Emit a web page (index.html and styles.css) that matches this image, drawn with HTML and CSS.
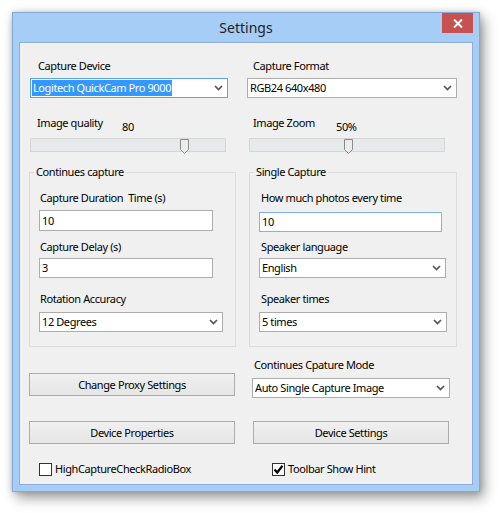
FILE: index.html
```html
<!DOCTYPE html>
<html>
<head>
<meta charset="utf-8">
<link rel="stylesheet" href="styles.css">
</head>
<body>
<div class="window">
  <div class="titlebar">
    <div></div>
    <div class="title">Settings</div>
    <div class="close"><svg width="10" height="9" viewBox="0 0 10 9"><path d="M1 0.5 L9 8.5 M9 0.5 L1 8.5" stroke="#fff" stroke-width="2" fill="none"/></svg></div>
  </div>
  <div class="client">
    <div class="grid top">
      <div class="col">
        <div class="lbl l-dev">Capture Device</div>
        <div class="combo focus c-dev"><span class="sel">Logitech QuickCam Pro 9000</span><svg class="arrow" width="9" height="6" viewBox="0 0 9 6"><path d="M1 1 L4.5 4.5 L8 1" stroke="#555" stroke-width="1.7" fill="none"/></svg></div>
      </div>
      <div class="col">
        <div class="lbl l-fmt">Capture Format</div>
        <div class="combo c-fmt"><span>RGB24 640x480</span><svg class="arrow" width="9" height="6" viewBox="0 0 9 6"><path d="M1 1 L4.5 4.5 L8 1" stroke="#555" stroke-width="1.7" fill="none"/></svg></div>
      </div>
    </div>

    <div class="grid sliders">
      <div class="col">
        <div class="shead"><span class="sname q-name">Image quality</span><span class="sval">80</span></div>
        <div class="track t-q"><svg class="thumb th-q" width="10" height="16" viewBox="0 0 10 16"><path d="M0.5 0.5 H8.5 V10.5 L4.5 14.5 L0.5 10.5 Z" fill="#ececec" stroke="#8a8a8a" stroke-width="1"/></svg></div>
      </div>
      <div class="col">
        <div class="shead"><span class="sname z-name">Image Zoom</span><span class="sval">50%</span></div>
        <div class="track t-z"><svg class="thumb th-z" width="10" height="16" viewBox="0 0 10 16"><path d="M0.5 0.5 H8.5 V10.5 L4.5 14.5 L0.5 10.5 Z" fill="#ececec" stroke="#8a8a8a" stroke-width="1"/></svg></div>
      </div>
    </div>

    <div class="grid groups">
      <fieldset class="grp g-left">
        <legend>Continues capture</legend>
        <div class="gbody">
          <div class="lbl gl1">Capture Duration&nbsp; Time (s)</div>
          <div class="input in1">10</div>
          <div class="lbl gl2">Capture Delay (s)</div>
          <div class="input in2">3</div>
          <div class="lbl gl3">Rotation Accuracy</div>
          <div class="combo gc3"><span>12 Degrees</span><svg class="arrow" width="9" height="6" viewBox="0 0 9 6"><path d="M1 1 L4.5 4.5 L8 1" stroke="#555" stroke-width="1.7" fill="none"/></svg></div>
        </div>
      </fieldset>
      <fieldset class="grp g-right">
        <legend>Single Capture</legend>
        <div class="gbody rbody">
          <div class="lbl gl1">How much photos every time</div>
          <div class="input focus rin1">10</div>
          <div class="lbl rl2">Speaker language</div>
          <div class="combo rc2"><span>English</span><svg class="arrow" width="9" height="6" viewBox="0 0 9 6"><path d="M1 1 L4.5 4.5 L8 1" stroke="#555" stroke-width="1.7" fill="none"/></svg></div>
          <div class="lbl gl3">Speaker times</div>
          <div class="combo rc3"><span>5 times</span><svg class="arrow" width="9" height="6" viewBox="0 0 9 6"><path d="M1 1 L4.5 4.5 L8 1" stroke="#555" stroke-width="1.7" fill="none"/></svg></div>
        </div>
      </fieldset>
    </div>

    <div class="grid proxy">
      <div class="col">
        <div class="btn b-proxy">Change Proxy Settings</div>
      </div>
      <div class="col">
        <div class="lbl l-mode">Continues Cpature Mode</div>
        <div class="combo c-mode"><span>Auto Single Capture Image</span><svg class="arrow" width="9" height="6" viewBox="0 0 9 6"><path d="M1 1 L4.5 4.5 L8 1" stroke="#555" stroke-width="1.7" fill="none"/></svg></div>
      </div>
    </div>

    <div class="grid buttons">
      <div class="btn b-props">Device Properties</div>
      <div class="btn b-dset">Device Settings</div>
    </div>

    <div class="grid checks">
      <div class="chk ck-left"><span class="box"></span><span>HighCaptureCheckRadioBox</span></div>
      <div class="chk ck-right"><span class="box"><svg width="11" height="11" viewBox="0 0 11 11"><path d="M1.5 5.5 L4.2 8.5 L9.5 1.8" stroke="#000" stroke-width="2.2" fill="none"/></svg></span><span>Toolbar Show Hint</span></div>
    </div>
  </div>
</div>
</body>
</html>
```

FILE: styles.css
```css
* { box-sizing: border-box; }
html, body { margin: 0; padding: 0; background: #ffffff; }
body {
  font-family: "Noto Sans", "Open Sans", sans-serif;
  font-size: 11px;
  letter-spacing: -0.4px;
  color: #000;
  width: 500px;
  height: 513px;
  overflow: hidden;
}
.window {
  margin: 12px 0 0 12px;
  width: 468px;
  height: 480px;
  background: #a5cdf6;
  border: 1px solid #82a9d8;
  box-shadow: 0 0 6px rgba(0,0,0,0.18), 4px 6px 12px rgba(0,0,0,0.38);
}
.titlebar {
  height: 29px;
  display: grid;
  grid-template-columns: 1fr auto 1fr;
  align-items: center;
}
.title {
  font-size: 14px;
  letter-spacing: 0;
  color: #1f1f1f;
  line-height: 20px;
}
.close {
  justify-self: end;
  align-self: start;
  margin-right: 6px;
  width: 31px;
  height: 20px;
  background: #c75050;
  display: flex;
  align-items: center;
  justify-content: center;
}
.client {
  margin: 0 6px;
  width: 454px;
  height: 443px;
  background: #f0f0f0;
  border: 1px solid #8eaed6;
  padding: 15px 0 0 9px;
}
.grid {
  display: grid;
  grid-template-columns: 206px 210px;
  column-gap: 12px;
  align-items: start;
}
.col { display: flex; flex-direction: column; align-items: flex-start; }
.lbl { line-height: 16px; white-space: nowrap; }

.combo {
  height: 20px;
  background: #fff;
  border: 1px solid #acacac;
  display: flex;
  align-items: center;
  justify-content: space-between;
  padding: 0 4px 0 2px;
  line-height: 16px;
  white-space: nowrap;
}
.combo.focus { border-color: #5ea3e6; padding-left: 1px; }
.sel { background: #3399ff; color: #fff; padding: 0 1px; height: 16px; }
.arrow { flex: none; }

.l-dev { margin-left: 9px; }
.c-dev { margin-left: 1px; width: 198px; margin-top: 4px; }
.l-fmt { margin-left: 6px; }
.c-fmt { width: 210px; margin-top: 4px; }

.sliders { margin-top: 17px; }
.shead { display: flex; height: 23px; align-items: flex-start; line-height: 16px; }
.sval { margin-top: 4px; }
.q-name { margin-left: 8px; width: 85px; }
.z-name { margin-left: 6px; width: 83px; }
.track {
  position: relative;
  height: 14px;
  width: 196px;
  background: #e7eaea;
  border: 1px solid #d6d6d6;
}
.t-q { margin-left: 1px; }
.t-z { margin-left: 2px; }
.thumb { position: absolute; top: 0px; }
.th-q { left: 149px; }
.th-z { left: 94px; }

.groups { margin-top: 12px; }
.grp {
  margin: 0;
  padding: 0;
  border: 1px solid #dcdcdc;
  min-width: 0;
}
.grp legend {
  margin-left: 4px;
  padding: 0 2px;
  line-height: 16px;
}
.g-left { width: 207px; }
.g-right { width: 208px; margin-left: 2px; }
.gbody { padding: 0 0 14px 0; display: flex; flex-direction: column; align-items: flex-start; }
.input {
  background: #fff;
  border: 1px solid #acacac;
  line-height: 16px;
  padding: 0 2px;
  display: flex;
  align-items: center;
}
.input.focus { border-color: #7eb4ea; }
.gl1 { margin-top: 10px; margin-left: 10px; }
.in1 { margin-top: 4px; margin-left: 9px; width: 174px; height: 21px; }
.gl2 { margin-top: 8px; margin-left: 10px; }
.in2 { margin-top: 3px; margin-left: 9px; width: 174px; height: 20px; }
.gl3 { margin-top: 13px; margin-left: 10px; }
.gc3 { margin-top: 5px; margin-left: 9px; width: 184px; }

.rbody .gl1, .rbody .gl3, .rl2 { margin-left: 11px; }
.rin1 { margin-top: 6px; margin-left: 9px; width: 183px; height: 20px; }
.rl2 { margin-top: 7px; }
.rc2 { margin-top: 3px; margin-left: 9px; width: 187px; }
.rc3 { margin-top: 5px; margin-left: 9px; width: 188px; }

.btn {
  height: 23px;
  border: 1px solid #acacac;
  background: linear-gradient(#f0f0f0, #e5e5e5);
  display: flex;
  align-items: center;
  justify-content: center;
  white-space: nowrap;
}
.proxy { margin-top: 10px; }
.b-proxy { margin-top: 16px; width: 206px; }
.l-mode { margin-left: 7px; }
.c-mode { margin-top: 5px; margin-left: 5px; width: 198px; }

.buttons { margin-top: 23px; }
.b-props { width: 206px; }
.b-dset { width: 196px; margin-left: 6px; }

.checks { margin-top: 17px; }
.chk { display: flex; align-items: center; gap: 3px; line-height: 16px; white-space: nowrap; }
.box {
  width: 13px;
  height: 13px;
  border: 1px solid #333;
  background: #fff;
  display: flex;
  align-items: center;
  justify-content: center;
  flex: none;
}
.ck-left { margin-left: 10px; }
.ck-right { margin-left: 25px; }
```
